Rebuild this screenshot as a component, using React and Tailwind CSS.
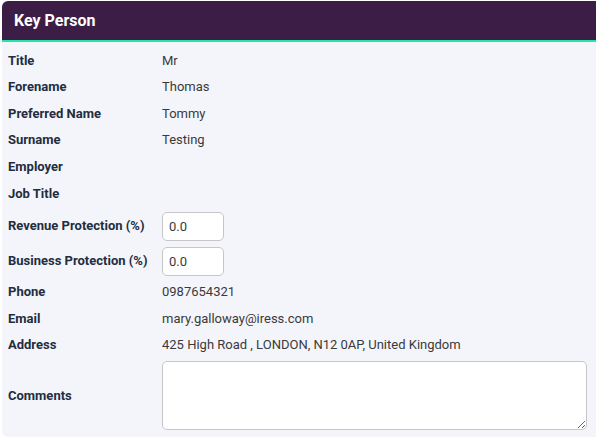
export default function App() {
  return (
    <div
      className="w-[596px] h-[438px] overflow-hidden bg-white pl-[2px] pt-[1px]"
      style={{ fontFamily: "Roboto, 'Liberation Sans', sans-serif" }}
    >
      <div className="w-[610px] rounded-l-md overflow-hidden bg-[#f4f5fa]">
        {/* HEADER */}
        <div className="h-[41px] flex items-center px-3 bg-[#3b1d45] border-b-[2.5px] border-[#22e6a4]">
          <h2 className="text-[16px] font-bold text-white">Key Person</h2>
        </div>

        {/* BODY */}
        <div className="pt-[5px] pb-[7px] pl-[6px] text-[13px]">
          <Row label="Title" value="Mr" />
          <Row label="Forename" value="Thomas" />
          <Row label="Preferred Name" value="Tommy" />
          <Row label="Surname" value="Testing" />
          <Row label="Employer" />
          <Row label="Job Title" />
          <div className="h-[2px]" />
          <InputRow label="Revenue Protection (%)" value="0.0" />
          <InputRow label="Business Protection (%)" value="0.0" />
          <Row label="Phone" value="0987654321" />
          <Row label="Email" value="mary.galloway@iress.com" />
          <Row label="Address" value="425 High Road , LONDON, N12 0AP, United Kingdom" />

          <div className="flex items-center mt-[3px]">
            <div className="w-[154px] font-bold text-[#232d3f]">Comments</div>
            <textarea className="w-[425px] h-[69px] bg-white border border-[#c6c6c6] rounded-[5px] outline-none" />
          </div>
        </div>
      </div>
    </div>
  )
}

function Row({ label, value }) {
  return (
    <div className="flex items-center h-[26.6px]">
      <div className="w-[154px] font-bold text-[#232d3f]">{label}</div>
      <div className="text-[#3a3a3a]">{value}</div>
    </div>
  )
}

function InputRow({ label, value }) {
  return (
    <div className="flex items-center h-[35px]">
      <div className="w-[154px] font-bold text-[#232d3f]">{label}</div>
      <input
        defaultValue={value}
        className="w-[62px] h-[29px] px-[6px] bg-white border border-[#c6c6c6] rounded-[5px] text-[#3a3a3a] outline-none"
      />
    </div>
  )
}
